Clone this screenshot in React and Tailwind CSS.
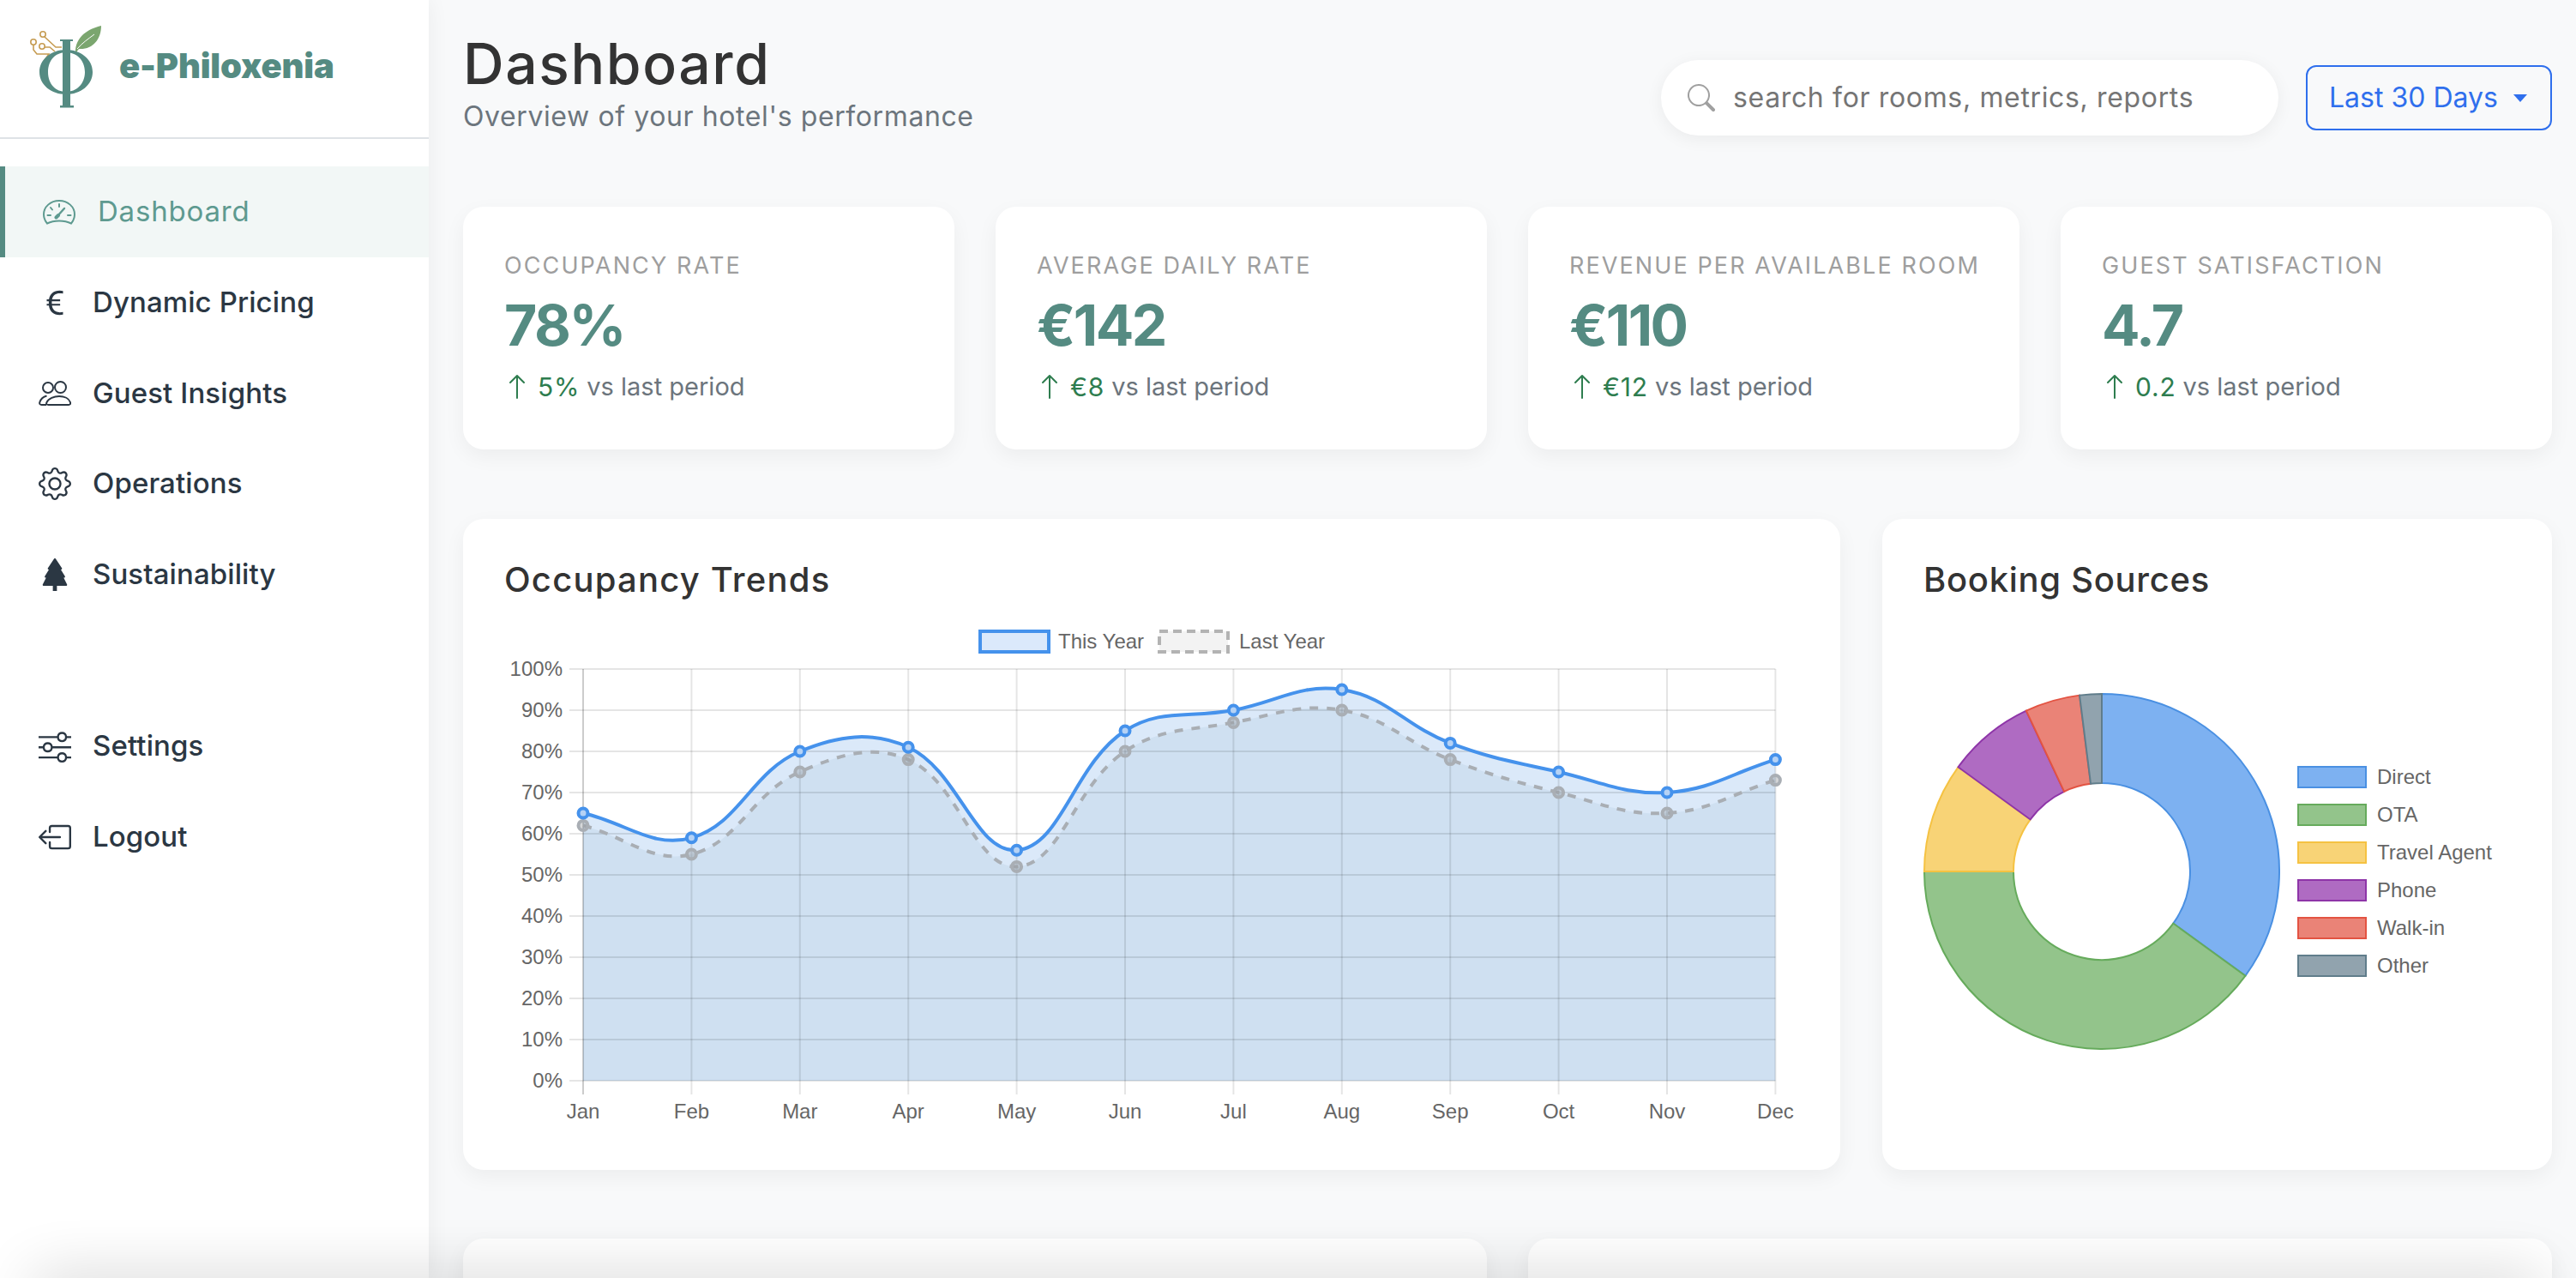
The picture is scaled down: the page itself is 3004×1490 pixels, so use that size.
import React from 'react';
import {
  BsCurrencyEuro, BsGear, BsTreeFill, BsSliders,
  BsBoxArrowLeft, BsSearch, BsArrowUp,
} from 'react-icons/bs';

const TEAL = '#558b82';

// gauge with curved base, the package one is too heavy
const GaugeIcon = () => (
  <svg width="38" height="29" viewBox="0 0 38 29" fill="none" stroke="currentColor" strokeWidth="2" strokeLinecap="round">
    <path d="M5 27.5 C2.5 24.5 1 21 1 17 C1 8 9 1 19 1 C29 1 37 8 37 17 C37 21 35.5 24.5 33 27.5 C28 25 24 24.5 19 24.5 C14 24.5 10 25 5 27.5 Z" />
    <path d="M19 5 V8 M9 9 L11 11.500 M5.500 18 H9 M29 18 H32.500" />
    <path d="M16 20 L25 10" strokeWidth="2.4" />
    <path d="M15.500 20.500 L18 18" strokeWidth="4" />
  </svg>
);

const GuestsIcon = () => (
  <svg width="38" height="29" viewBox="0 0 38 29" fill="none" stroke="currentColor" strokeWidth="2">
    <circle cx="11" cy="8" r="6" />
    <circle cx="25.500" cy="7.500" r="6.500" />
    <path d="M11.500 28 C9.500 28 8.500 27 9.500 25 C11.500 20.500 18 18 24 18 C30 18 35.500 20.500 37 25 C37.500 27 36.500 28 35 28 Z" />
    <path d="M9.500 17.500 C6 18.500 2.500 21 1.300 25 C0.800 27 1.800 28 3.500 28 H9" />
  </svg>
);

const navTop = [
  { name: 'Dynamic Pricing', icon: <BsCurrencyEuro size={38} /> },
  { name: 'Guest Insights', icon: <GuestsIcon /> },
  { name: 'Operations', icon: <BsGear size={38} /> },
  { name: 'Sustainability', icon: <BsTreeFill size={38} /> },
];
const navBottom = [
  { name: 'Settings', icon: <BsSliders size={38} /> },
  { name: 'Logout', icon: <BsBoxArrowLeft size={38} /> },
];

const stats = [
  { label: 'OCCUPANCY RATE', value: '78%', change: '5%' },
  { label: 'AVERAGE DAILY RATE', value: '€142', change: '€8' },
  { label: 'REVENUE PER AVAILABLE ROOM', value: '€110', change: '€12' },
  { label: 'GUEST SATISFACTION', value: '4.7', change: '0.2' },
];

const months = ['Jan', 'Feb', 'Mar', 'Apr', 'May', 'Jun', 'Jul', 'Aug', 'Sep', 'Oct', 'Nov', 'Dec'];
const thisYear = [65, 59, 80, 81, 56, 85, 90, 95, 82, 75, 70, 78];
const lastYear = [62, 55, 75, 78, 52, 80, 87, 90, 78, 70, 65, 73];

const X0 = 680;
const XSTEP = 126.4;
const Y0 = 1260;
const YUNIT = 4.8;

const toPoints = (data) => data.map((v, i) => ({ x: X0 + i * XSTEP, y: Y0 - v * YUNIT }));

// same bezier as chart.js with tension 0.4
const splinePath = (pts) => {
  const ctrl = pts.map((cur, i) => {
    const prev = pts[i - 1] || cur;
    const next = pts[i + 1] || cur;
    const d01 = Math.hypot(cur.x - prev.x, cur.y - prev.y);
    const d12 = Math.hypot(next.x - cur.x, next.y - cur.y);
    const total = d01 + d12 || 1;
    const fa = 0.4 * (d01 / total);
    const fb = 0.4 * (d12 / total);
    return {
      c1: { x: cur.x - fa * (next.x - prev.x), y: cur.y - fa * (next.y - prev.y) },
      c2: { x: cur.x + fb * (next.x - prev.x), y: cur.y + fb * (next.y - prev.y) },
    };
  });
  let d = `M${pts[0].x} ${pts[0].y}`;
  for (let i = 1; i < pts.length; i++) {
    d += ` C${ctrl[i - 1].c2.x} ${ctrl[i - 1].c2.y} ${ctrl[i].c1.x} ${ctrl[i].c1.y} ${pts[i].x} ${pts[i].y}`;
  }
  return d;
};

const OccupancyChart = () => {
  const a = toPoints(thisYear);
  const b = toPoints(lastYear);
  const pathA = splinePath(a);
  const pathB = splinePath(b);
  const close = ` L${X0 + 11 * XSTEP} ${Y0} L${X0} ${Y0} Z`;
  const labelClass = "font-['Liberation_Sans',sans-serif] text-[24px] fill-[#666]";
  return (
    <svg width="1510" height="600" viewBox="588 720 1510 600" className="block mt-[21px]">
      {/* legend */}
      <rect x="1143" y="736" width="80" height="24" fill="#dbe9fb" stroke="#4592ec" strokeWidth="4" />
      <text x="1234" y="756" className={labelClass}>This Year</text>
      <rect x="1352" y="736" width="80" height="24" fill="#f3f3f3" stroke="#b3b3b3" strokeWidth="4" strokeDasharray="10 6" />
      <text x="1445" y="756" className={labelClass}>Last Year</text>

      {/* fills first, the grid shows through them */}
      <path d={pathB + close} fill="rgba(110,150,170,0.1)" />
      <path d={pathA + close} fill="rgba(74,144,226,0.2)" />

      {Array.from({ length: 11 }, (_, i) => {
        const y = Y0 - i * 48;
        return (
          <g key={i}>
            <line x1="664" x2={X0 + 11 * XSTEP} y1={y} y2={y} stroke="rgba(0,0,0,0.1)" strokeWidth="2" />
            <text x="656" y={y + 8} textAnchor="end" className={labelClass}>{i * 10}%</text>
          </g>
        );
      })}
      {months.map((m, i) => {
        const x = X0 + i * XSTEP;
        return (
          <g key={m}>
            <line x1={x} x2={x} y1="780" y2="1276" stroke={i === 0 ? 'rgba(0,0,0,0.2)' : 'rgba(0,0,0,0.1)'} strokeWidth="2" />
            <text x={x} y="1304" textAnchor="middle" className={labelClass}>{m}</text>
          </g>
        );
      })}

      <path d={pathB} fill="none" stroke="#a9aeb4" strokeWidth="4" strokeDasharray="10 10" />
      {b.map((p, i) => (
        <circle key={i} cx={p.x} cy={p.y} r="5.5" fill="rgba(150,155,160,0.4)" stroke="#a9aeb4" strokeWidth="4" />
      ))}
      <path d={pathA} fill="none" stroke="#4592ec" strokeWidth="4" />
      {a.map((p, i) => (
        <circle key={i} cx={p.x} cy={p.y} r="5.5" fill="#b5d2f5" stroke="#4592ec" strokeWidth="4" />
      ))}
    </svg>
  );
};

const bookings = [
  { name: 'Direct', value: 35, fill: '#7db1f1', stroke: '#4a90e2' },
  { name: 'OTA', value: 40, fill: '#93c48b', stroke: '#66ab5c' },
  { name: 'Travel Agent', value: 10, fill: '#f8d376', stroke: '#f5c242' },
  { name: 'Phone', value: 8, fill: '#af6bc2', stroke: '#8e35a8' },
  { name: 'Walk-in', value: 5, fill: '#ea8377', stroke: '#e35342' },
  { name: 'Other', value: 2, fill: '#91a3ae', stroke: '#607d8b' },
];

const DonutChart = () => {
  const cx = 2451;
  const cy = 1016;
  const R = 207;
  const r = 103;
  const pt = (rad, pct) => {
    const a = (pct / 100) * Math.PI * 2;
    return `${cx + rad * Math.sin(a)} ${cy - rad * Math.cos(a)}`;
  };
  let acc = 0;
  return (
    <svg width="685" height="430" viewBox="2243 800 685 430" className="block mt-[101px]">
      {bookings.map((s) => {
        const from = acc;
        acc += s.value;
        const large = s.value > 50 ? 1 : 0;
        const d = `M${pt(R, from)} A${R} ${R} 0 ${large} 1 ${pt(R, acc)} L${pt(r, acc)} A${r} ${r} 0 ${large} 0 ${pt(r, from)} Z`;
        return <path key={s.name} d={d} fill={s.fill} stroke={s.stroke} strokeWidth="2" />;
      })}
      {bookings.map((s, i) => (
        <g key={s.name}>
          <rect x="2680" y={894 + i * 44} width="79" height="24" fill={s.fill} stroke={s.stroke} strokeWidth="2" />
          <text x="2772" y={914 + i * 44} className="font-['Liberation_Sans',sans-serif] text-[24px] fill-[#666]">{s.name}</text>
        </g>
      ))}
    </svg>
  );
};

const Logo = () => (
  <svg width="100" height="110" viewBox="30 25 100 110" className="shrink-0">
    {/* leaf */}
    <path d="M88 58 C90 42 102 34 118 30 C118 46 108 58 92 57 L88 62 Z" fill="#7ba66f" />
    <path d="M90 57 C96 50 102 46 110 40" fill="none" stroke="#fff" strokeWidth="1" />
    {/* circuit */}
    <g fill="none" stroke="#c69c52" strokeWidth="1.6">
      <circle cx="50" cy="40" r="3.2" />
      <circle cx="39" cy="49" r="3.2" />
      <circle cx="49" cy="54" r="3.2" />
      <path d="M52 43 L65 55 L72 55" />
      <path d="M52 55 L58 55 L64 60" />
      <path d="M39 52 L39 58 L43 63 L57 63 L50 73" />
    </g>
    {/* phi */}
    <path fillRule="evenodd" fill={TEAL} d="M77 58 C94 58 108 69 108 84 C108 99 94 110 77 110 C60 110 46 99 46 84 C46 69 60 58 77 58 Z M77 61 C65 61 56 70 56 84 C56 98 65 107 77 107 C89 107 99 98 99 84 C99 70 89 61 77 61 Z" />
    <rect x="73" y="47" width="9" height="77" fill={TEAL} />
    <rect x="70" y="46" width="15" height="2" fill={TEAL} />
    <rect x="70" y="123" width="16" height="2.5" fill={TEAL} />
  </svg>
);

const NavItem = ({ name, icon }) => (
  <a className="flex items-center h-[105.6px] pl-[45px] text-[#2b3743] text-[33px] font-medium tracking-[0.1px]">
    <span className="w-[38px] flex justify-center shrink-0">{icon}</span>
    <span className="ml-[25px]">{name}</span>
  </a>
);

const StatCard = ({ label, value, change }) => (
  <div className="bg-white rounded-[24px] h-[283px] pt-[49px] pl-[48px] shadow-[0_8px_24px_rgba(0,0,0,0.05)]">
    <p className="text-[27px] leading-[40px] tracking-[2.1px] text-[#9e9e9e] whitespace-nowrap">{label}</p>
    <p className="mt-[11px] text-[66px] leading-[76px] font-bold tracking-[-2.5px] text-[#558b82]">{value}</p>
    <div className="mt-[12px] flex items-center h-[44px] text-[29px]">
      <BsArrowUp size={32} className="text-[#2e7d4f] -ml-[1px]" />
      <span className="ml-[8px] text-[30px] tracking-[0.8px] text-[#2e7d4f]">{change}</span>
      <span className="ml-[8px] text-[#6c757d]">vs last period</span>
    </div>
  </div>
);

export default function App() {
  return (
    <div className="relative flex h-[1490px] overflow-hidden bg-[#f8f9fa] font-['Inter',sans-serif]">
      <aside className="w-[500px] shrink-0 bg-white shadow-[0_0_24px_rgba(0,0,0,0.06)] z-10">
        <div className="h-[162px] border-b-2 border-[#dee2e6] flex items-start pl-[30px] pt-[25px]">
          <Logo />
          <span className="ml-[9px] mt-[26px] text-[40px] leading-[52px] font-black tracking-[-0.2px] text-[#558b82]">e-Philoxenia</span>
        </div>
        <nav className="pt-[32px]">
          <a className="flex items-center h-[106px] pl-[44px] border-l-[6px] border-[#558b82] bg-[#f2f7f6] text-[#5e9a90] text-[33px] tracking-[0.8px]">
            <span className="w-[38px] flex justify-center shrink-0"><GaugeIcon /></span>
            <span className="ml-[26px]">Dashboard</span>
          </a>
          {navTop.map((item) => <NavItem key={item.name} {...item} />)}
          <div className="h-[95px]" />
          {navBottom.map((item) => <NavItem key={item.name} {...item} />)}
        </nav>
      </aside>

      <main className="flex-1 min-w-0 pl-[40px] pr-[28px] pt-[36px]">
        <header className="flex items-start justify-between h-[124px]">
          <div>
            <h1 className="text-[66px] leading-[76px] font-medium tracking-[1.6px] text-[#333333]">Dashboard</h1>
            <p className="text-[32px] leading-[48px] tracking-[0.6px] text-[#6c757d]">Overview of your hotel's performance</p>
          </div>
          <div className="mt-[34px] flex items-center gap-[32px]">
            <div className="w-[720px] h-[88px] rounded-full bg-white flex items-center pl-[31px] shadow-[0_4px_20px_rgba(0,0,0,0.06)]">
              <BsSearch size={32} className="text-[#a0a0a0]" />
              <span className="ml-[21px] text-[32px] tracking-[0.65px] text-[#757575] whitespace-nowrap">search for rooms, metrics, reports</span>
            </div>
            <button className="w-[287px] h-[76px] rounded-[12px] border-2 border-[#2f6fed] text-[#2f6fed] text-[32px] flex items-center pl-[25px]">
              Last 30 Days
              <span className="ml-[18px] w-0 h-0 border-x-[8px] border-x-transparent border-t-[9px] border-t-[#2f6fed]" />
            </button>
          </div>
        </header>

        <section className="mt-[81px] grid grid-cols-4 gap-[48px]">
          {stats.map((s) => <StatCard key={s.label} {...s} />)}
        </section>

        <section className="mt-[81px] grid grid-cols-[1606px_781px] gap-[49px]">
          <div className="bg-white rounded-[24px] h-[759px] pt-[48px] pl-[48px] shadow-[0_8px_24px_rgba(0,0,0,0.05)]">
            <h2 className="text-[40px] leading-[46px] font-medium tracking-[1.2px] text-[#333333]">Occupancy Trends</h2>
            <OccupancyChart />
          </div>
          <div className="bg-white rounded-[24px] h-[759px] pt-[48px] pl-[48px] shadow-[0_8px_24px_rgba(0,0,0,0.05)]">
            <h2 className="text-[40px] leading-[46px] font-medium tracking-[0.7px] text-[#333333]">Booking Sources</h2>
            <DonutChart />
          </div>
        </section>

        <section className="mt-[80px] grid grid-cols-2 gap-[48px]">
          <div className="bg-white rounded-[24px] h-[400px] shadow-[0_8px_24px_rgba(0,0,0,0.05)]" />
          <div className="bg-white rounded-[24px] h-[400px] shadow-[0_8px_24px_rgba(0,0,0,0.05)]" />
        </section>
      </main>

      {/* dark fade along the bottom edge of the window */}
      <div className="absolute z-20 left-[40px] right-[40px] top-[1490px] h-[40px] shadow-[0_0_70px_rgba(0,0,0,0.2)]" />
    </div>
  );
}
